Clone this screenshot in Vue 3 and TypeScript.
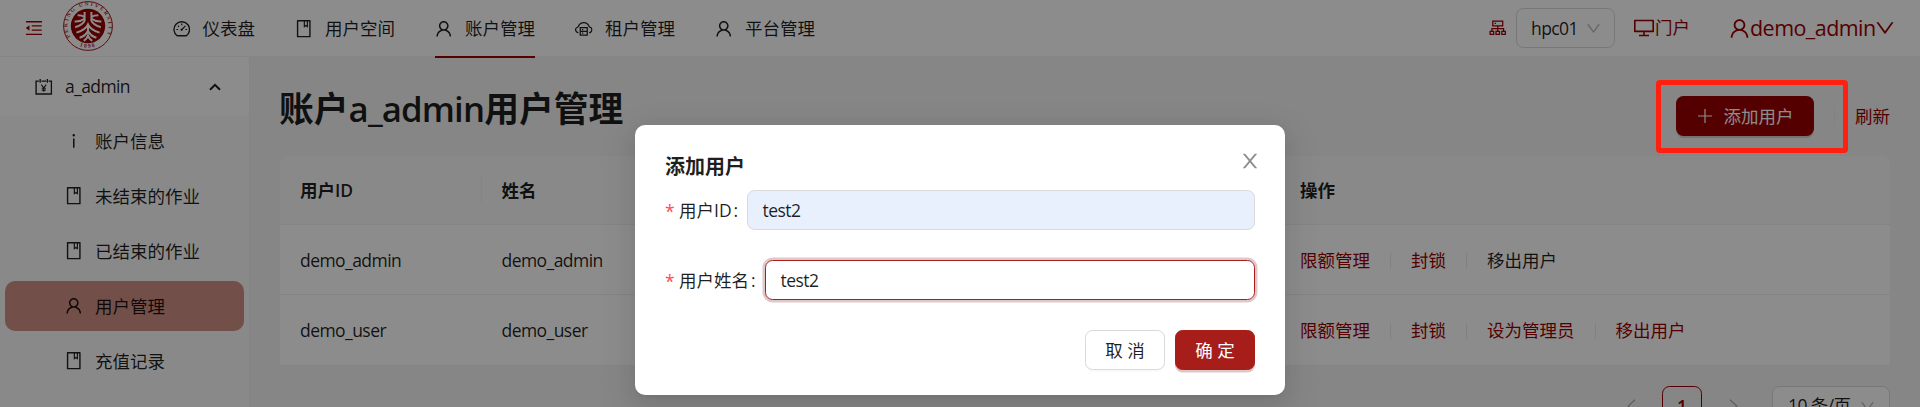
<script setup lang="ts">
type IconName = 'dashboard' | 'book' | 'user' | 'cloud' | 'info'

interface MenuItem {
  icon: IconName
  label: string
  active?: boolean
}

interface Action {
  label: string
  disabled?: boolean
}

interface Row {
  id: string
  name: string
  actions: Action[]
}

const topMenu: MenuItem[] = [
  { icon: 'dashboard', label: '仪表盘' },
  { icon: 'book', label: '用户空间' },
  { icon: 'user', label: '账户管理', active: true },
  { icon: 'cloud', label: '租户管理' },
  { icon: 'user', label: '平台管理' },
]

const sideMenu: MenuItem[] = [
  { icon: 'info', label: '账户信息' },
  { icon: 'book', label: '未结束的作业' },
  { icon: 'book', label: '已结束的作业' },
  { icon: 'user', label: '用户管理', active: true },
  { icon: 'book', label: '充值记录' },
]

const rows: Row[] = [
  {
    id: 'demo_admin',
    name: 'demo_admin',
    actions: [{ label: '限额管理' }, { label: '封锁' }, { label: '移出用户', disabled: true }],
  },
  {
    id: 'demo_user',
    name: 'demo_user',
    actions: [{ label: '限额管理' }, { label: '封锁' }, { label: '设为管理员' }, { label: '移出用户' }],
  },
]
</script>

<template>
  <div class="page">
    <svg class="defs" aria-hidden="true">
      <symbol id="i-user" viewBox="64 64 896 896">
        <path d="M858.5 763.6a374 374 0 00-80.6-119.5 375.63 375.63 0 00-119.5-80.6c-.4-.2-.8-.3-1.2-.5C719.5 518 760 444.7 760 362c0-137-111-248-248-248S264 225 264 362c0 82.7 40.5 156 102.8 201.1-.4.2-.8.3-1.2.5-44.8 18.9-85 46-119.5 80.6a375.63 375.63 0 00-80.6 119.5A371.7 371.7 0 00136 901.8a8 8 0 008 8.2h60c4.4 0 7.9-3.5 8-7.8 2-77.2 33-149.5 87.8-204.3 56.7-56.7 132-87.9 212.2-87.9s155.5 31.2 212.2 87.9C779 752.7 810 825 812 902.2c.1 4.4 3.6 7.8 8 7.8h60a8 8 0 008-8.2c-1-47.8-10.9-94.3-29.5-138.2zM512 534c-45.9 0-89.1-17.9-121.6-50.4S340 407.9 340 362c0-45.9 17.9-89.1 50.4-121.6S466.1 190 512 190s89.1 17.9 121.6 50.4S684 316.1 684 362c0 45.9-17.9 89.1-50.4 121.6S557.9 534 512 534z" />
      </symbol>
      <symbol id="i-book" viewBox="64 64 896 896">
        <path d="M832 64H192c-17.7 0-32 14.3-32 32v832c0 17.7 14.3 32 32 32h640c17.7 0 32-14.3 32-32V96c0-17.7-14.3-32-32-32zm-260 72h96v209.9L621.5 312 572 347.4V136zm220 752H232V136h280v296.9c0 3.3 1 6.6 3 9.3a15.9 15.9 0 0022.3 3.7l83.8-59.9 81.4 59.4c2.7 2 6 3.1 9.4 3.1 8.8 0 16-7.2 16-16V136h64v752z" />
      </symbol>
      <symbol id="i-info" viewBox="64 64 896 896">
        <path d="M448 224a64 64 0 10128 0 64 64 0 10-128 0zm96 168h-64c-4.4 0-8 3.6-8 8v464c0 4.4 3.6 8 8 8h64c4.4 0 8-3.6 8-8V400c0-4.4-3.6-8-8-8z" />
      </symbol>
      <symbol id="i-down" viewBox="64 64 896 896">
        <path d="M884 256h-75c-5.1 0-9.9 2.5-12.9 6.6L512 654.2 227.9 262.6c-3-4.1-7.8-6.6-12.9-6.6h-75c-6.5 0-10.3 7.4-6.5 12.7l352.6 486.1c12.8 17.6 39 17.6 51.7 0l352.6-486.1c3.9-5.3.1-12.7-6.4-12.7z" />
      </symbol>
      <symbol id="i-close" viewBox="64 64 896 896">
        <path d="M563.8 512l262.5-312.9c4.4-5.2.7-13.1-6.1-13.1h-79.8c-4.7 0-9.2 2.1-12.3 5.7L511.6 449.8 295.1 191.7c-3-3.6-7.5-5.7-12.3-5.7H203c-6.8 0-10.5 7.9-6.1 13.1L459.4 512 196.9 824.9A7.95 7.95 0 00203 838h79.8c4.7 0 9.2-2.1 12.3-5.7l216.5-258.1 216.5 258.1c3 3.6 7.5 5.7 12.3 5.7h79.8c6.8 0 10.5-7.9 6.1-13.1L563.8 512z" />
      </symbol>
      <symbol id="i-desktop" viewBox="64 64 896 896">
        <path d="M928 140H96c-17.7 0-32 14.3-32 32v496c0 17.7 14.3 32 32 32h380v112H304c-8.8 0-16 7.2-16 16v48c0 4.4 3.6 8 8 8h432c4.4 0 8-3.6 8-8v-48c0-8.8-7.2-16-16-16H548V700h380c17.7 0 32-14.3 32-32V172c0-17.7-14.3-32-32-32zm-40 488H136V212h752v416z" />
      </symbol>
      <symbol id="i-fold" viewBox="64 64 896 896">
        <path d="M408 442h480c4.4 0 8-3.6 8-8v-56c0-4.4-3.6-8-8-8H408c-4.4 0-8 3.6-8 8v56c0 4.4 3.6 8 8 8zm-8 204c0 4.4 3.6 8 8 8h480c4.4 0 8-3.6 8-8v-56c0-4.4-3.6-8-8-8H408c-4.4 0-8 3.6-8 8v56zm504-486H120c-4.4 0-8 3.6-8 8v56c0 4.4 3.6 8 8 8h784c4.4 0 8-3.6 8-8v-56c0-4.4-3.6-8-8-8zm0 632H120c-4.4 0-8 3.6-8 8v56c0 4.4 3.6 8 8 8h784c4.4 0 8-3.6 8-8v-56c0-4.4-3.6-8-8-8zM115.4 518.9L271.7 642c5.8 4.6 14.4.5 14.4-6.9V388.9c0-7.4-8.5-11.5-14.4-6.9L115.4 505.1a8.74 8.74 0 000 13.8z" />
      </symbol>
      <symbol id="i-dashboard" viewBox="0 0 18 18">
        <g fill="none" stroke="currentColor" stroke-width="1.4">
          <path d="M4.2 16.2A8 8 0 1 1 13.8 16.2Z" stroke-linejoin="round" />
          <path d="M9 3.6v1.7M3.5 9.8h1.7M12.8 9.8h1.7M5.1 5.9l1.1 1.1M8.9 10l3.9-3.9" stroke-width="1.2" />
        </g>
        <circle cx="8.8" cy="10.1" r="1.1" />
      </symbol>
      <symbol id="i-cloud" viewBox="0 0 18 18">
        <g fill="none" stroke="currentColor" stroke-width="1.3">
          <path d="M3.4 13.2C-.4 12.2 -.2 7.8 3.1 7.2C5.4 1.1 12.6 1.1 14.9 7.2C18.2 7.8 18.4 12.2 14.6 13.2" />
          <path d="M5.4 7.9h7.2v7.7H5.4zM5.4 11.7h7.2" />
          <path d="M7.1 9.8h1.4M7.1 13.6h1.4" />
        </g>
      </symbol>
      <symbol id="i-cluster" viewBox="0 0 18 18">
        <g fill="none" stroke="currentColor" stroke-width="1.3">
          <path d="M3.9 2.1h10.2v5H3.9zM9 7.1v5.3M3 12.6V9.9h12v2.7" />
          <path d="M1.2 12.7h3.6v3.1H1.2zM7.2 12.7h3.6v3.1H7.2zM13.2 12.7h3.6v3.1h-3.6z" />
          <path d="M5.8 4.6h1.4" />
        </g>
      </symbol>
      <symbol id="i-account" viewBox="0 0 18 18">
        <g fill="none" stroke="currentColor" stroke-width="1.4">
          <path d="M4 3.2H1.1v13.2h15.8V3.2H14M6.6 3.2h4.8M5.3 1v4M12.7 1v4" />
          <path d="M6.4 6.8L9 10.2l2.6-3.4M9 10.2v4M6.9 10.6h4.2M6.9 12.5h4.2" stroke-width="1.1" />
        </g>
      </symbol>
    </svg>

    <header class="header">
      <svg class="icon fold"><use href="#i-fold" /></svg>
      <svg class="logo" viewBox="0 0 50 50">
        <defs>
          <path id="ring-top" d="M7.4 36A20.6 20.6 0 1 1 42.6 36" />
          <path id="ring-bottom" d="M11 41.6A21.6 21.6 0 0 0 39 41.6" />
        </defs>
        <circle cx="25" cy="25" r="24.4" fill="#fff" stroke="#9b0000" stroke-width="0.9" />
        <circle cx="25" cy="25" r="17.2" fill="#9b0000" />
        <text class="seal"><textPath href="#ring-top" textLength="84">PEKING UNIVERSITY</textPath></text>
        <text class="seal year"><textPath href="#ring-bottom" startOffset="50%" text-anchor="middle">1898</textPath></text>
        <g fill="none" stroke="#fff" stroke-width="2">
          <path d="M21.6 11v8.6q-1.5 4-9.4 6.6M28.4 11v8.6q1.5 4 9.4 6.6" />
          <path d="M14.6 14.2q4.6 0 7 1.6M35.4 14.2q-4.6 0-7 1.6M11.6 20.4q6 .4 10-2.6M38.4 20.4q-6 .4-10-2.6" />
          <path d="M13.4 31.6Q22.6 29 25 23.4q2.4 5.6 11.6 8.2M16.6 36.8q6.8-2.4 8.4-7.2q1.6 4.8 8.4 7.2M25 23v9M20.8 39.8q3.2-2 4.2-5.2q1 3.2 4.2 5.2" />
        </g>
      </svg>
      <nav class="top-menu">
        <div v-for="item in topMenu" :key="item.label" class="top-item" :class="{ active: item.active }">
          <svg class="icon"><use :href="'#i-' + item.icon" /></svg>
          <span>{{ item.label }}</span>
        </div>
      </nav>
      <div class="header-right">
        <svg class="icon red"><use href="#i-cluster" /></svg>
        <div class="select cluster-select">
          <span>hpc01</span>
          <svg class="icon small grey"><use href="#i-down" /></svg>
        </div>
        <div class="portal">
          <svg class="icon"><use href="#i-desktop" /></svg><span>门户</span>
        </div>
        <div class="account">
          <svg class="icon"><use href="#i-user" /></svg><span>demo_admin</span><svg class="icon arrow"><use href="#i-down" /></svg>
        </div>
      </div>
    </header>

    <div class="body">
      <aside class="sidebar">
        <div class="side-title">
          <svg class="icon"><use href="#i-account" /></svg>
          <span class="side-name">a_admin</span>
          <svg class="caret" viewBox="0 0 12 8"><path d="M1 6.8L6 1.8l5 5" /></svg>
        </div>
        <div class="side-list">
          <div v-for="item in sideMenu" :key="item.label" class="side-item" :class="{ active: item.active }">
            <svg class="icon"><use :href="'#i-' + item.icon" /></svg>
            <span>{{ item.label }}</span>
          </div>
        </div>
      </aside>

      <main class="content">
        <div class="title-bar">
          <h1>账户<span class="latin">a_admin</span>用户管理</h1>
          <div class="tools">
            <button class="add">
              <svg class="plus" viewBox="0 0 14 14"><path d="M7 0v14M0 7h14" /></svg>
              <span>添加用户</span>
            </button>
            <i class="divider"></i>
            <a class="link refresh">刷新</a>
          </div>
        </div>

        <section class="table">
          <div class="tr head">
            <div class="th">用户<span class="th-latin">ID</span></div>
            <div class="th split">姓名</div>
            <div class="th">操作</div>
          </div>
          <div v-for="row in rows" :key="row.id" class="tr">
            <div class="td name">{{ row.id }}</div>
            <div class="td name">{{ row.name }}</div>
            <div class="td actions">
              <template v-for="(action, index) in row.actions" :key="action.label">
                <i v-if="index > 0" class="divider"></i>
                <a :class="action.disabled ? 'plain' : 'link'">{{ action.label }}</a>
              </template>
            </div>
          </div>
        </section>

        <div class="pager">
          <svg class="chev" viewBox="0 0 9 14"><path d="M8 .8L1.2 7 8 13.2" /></svg>
          <span class="page-no">1</span>
          <svg class="chev" viewBox="0 0 9 14"><path d="M1 .8L7.8 7 1 13.2" /></svg>
          <div class="select size-select">
            <span>10 条/页</span>
            <svg class="icon small grey"><use href="#i-down" /></svg>
          </div>
        </div>
      </main>
    </div>

    <div class="mask"></div>
    <div class="highlight"></div>

    <div class="modal">
      <div class="modal-head">
        <span class="modal-title">添加用户</span>
        <svg class="icon close"><use href="#i-close" /></svg>
      </div>
      <div class="field">
        <span class="star">*</span>
        <label class="label-id">用户ID<b class="colon">:</b></label>
        <div class="input filled">test2</div>
      </div>
      <div class="field">
        <span class="star">*</span>
        <label class="label-name">用户姓名<b class="colon">:</b></label>
        <div class="input focused">test2</div>
      </div>
      <div class="modal-foot">
        <button class="btn"><span>取 消</span></button>
        <button class="btn primary"><span>确 定</span></button>
      </div>
    </div>
  </div>
</template>

<style>
html,
body {
  overflow: hidden;
}
</style>

<style scoped>
.page {
  position: relative;
  width: 1920px;
  height: 407px;
  overflow: hidden;
  background: #f5f5f5;
  color: rgba(0, 0, 0, 0.88);
  font-family: 'Open Sans', 'Noto Sans CJK SC', sans-serif;
  font-size: 17.5px;
  font-weight: 400;
  line-height: 27.5px;
  white-space: nowrap;
}
.page * {
  box-sizing: border-box;
}
.defs {
  position: absolute;
  width: 0;
  height: 0;
}
.icon {
  display: block;
  flex: none;
  width: 17.5px;
  height: 17.5px;
  fill: currentColor;
}
.icon.small {
  width: 15px;
  height: 15px;
}
.red {
  color: #9b0000;
}
.grey {
  color: rgba(0, 0, 0, 0.28);
}
.header {
  display: flex;
  align-items: center;
  height: 57px;
  padding: 0 25px;
  background: #fff;
  border-bottom: 1px solid #f2f2f2;
}
.fold {
  width: 18px;
  height: 18px;
  color: #9b0000;
}
.logo {
  width: 50px;
  height: 50px;
  margin: 0 59.5px 5px 20px;
}
.seal {
  fill: #b03030;
  font-family: 'Liberation Serif', serif;
  font-size: 5.4px;
  font-weight: 700;
}
.seal.year {
  font-size: 5.8px;
  letter-spacing: 1.4px;
}
.top-menu {
  display: flex;
  gap: 40px;
}
.top-item {
  position: relative;
  display: flex;
  align-items: center;
  gap: 12.5px;
  height: 56px;
  padding-top: 2px;
}
.side-item span,
.add span,
.refresh,
.btn span {
  padding-top: 2px;
}
.top-item.active::after {
  content: '';
  position: absolute;
  left: 0;
  right: 0;
  bottom: -2px;
  height: 2px;
  background: #9b0000;
}
.header-right {
  display: flex;
  align-items: center;
  margin-left: auto;
}
.select {
  display: flex;
  align-items: center;
  justify-content: space-between;
  height: 40px;
  border: 1px solid #d9d9d9;
  border-radius: 7.5px;
  background: #fff;
}
.cluster-select {
  width: 99px;
  margin-left: 10px;
  padding: 0 13px 0 14px;
}
.cluster-select span {
  padding-top: 1px;
  letter-spacing: -0.6px;
}
.portal {
  display: flex;
  align-items: center;
  margin-left: 19px;
  color: #9b0000;
}
.portal .icon {
  width: 20px;
  height: 20px;
  margin-right: 1px;
}
.account {
  display: flex;
  align-items: center;
  margin-left: 39px;
  color: #9b0000;
  font-size: 21.5px;
}
.account .icon {
  width: 21px;
  height: 21px;
}
.account span {
  width: 125px;
  letter-spacing: -0.55px;
}
.account .arrow {
  width: 20px;
  height: 20px;
}
.body {
  display: flex;
  height: 350px;
}
.sidebar {
  flex: none;
  width: 250px;
  background: #fff;
  border-right: 1px solid #f0f0f0;
}
.side-title {
  display: flex;
  align-items: center;
  height: 59px;
  padding: 0 28px 0 35px;
}
.side-name {
  margin-left: 12.5px;
  letter-spacing: -0.6px;
}
.caret {
  width: 12px;
  height: 8px;
  margin-left: auto;
  fill: none;
  stroke: rgba(0, 0, 0, 0.88);
  stroke-width: 2;
}
.side-list {
  display: flex;
  flex-direction: column;
  gap: 5px;
  height: 291px;
  padding: 0 5px;
  background: #fafafa;
}
.side-item {
  display: flex;
  flex: none;
  align-items: center;
  gap: 12.5px;
  height: 50px;
  padding-left: 60px;
  border-radius: 10px;
}
.side-item.active {
  background: #d19085;
}
.content {
  flex: 1;
  padding: 24px 30px 0;
}
.title-bar {
  display: flex;
  justify-content: space-between;
  height: 75px;
}
h1 {
  margin: 0 0 0 -1px;
  font-size: 34.8px;
  font-weight: 700;
  line-height: 55px;
}
h1 .latin {
  font-weight: 600;
  letter-spacing: -0.9px;
}
.tools {
  display: flex;
  align-items: center;
  height: 40px;
  margin-top: 15px;
}
button {
  display: flex;
  align-items: center;
  justify-content: center;
  font: inherit;
}
.add {
  gap: 12px;
  width: 138px;
  height: 40px;
  padding: 0 0 0 1px;
  border: 0;
  border-radius: 7.5px;
  background: #9b0000;
  color: #fff;
  box-shadow: 0 2px 0 rgba(122, 0, 0, 0.16);
}
.plus {
  width: 14px;
  height: 14px;
  fill: none;
  stroke: #fff;
  stroke-width: 1.2;
}
.divider {
  width: 1px;
  height: 16px;
  margin: 0 20px;
  background: #ebebeb;
}
.link {
  color: #9b0000;
}
.table {
  width: 1610px;
  height: 210px;
  border-radius: 10px 10px 0 0;
  border-bottom: 1px solid #f0f0f0;
  background: #fff;
  overflow: hidden;
}
.tr {
  display: grid;
  grid-template-columns: 201.5px 798.5px 1fr;
  align-items: center;
  height: 70px;
  border-bottom: 1px solid #f0f0f0;
}
.tr:last-child {
  border-bottom: 0;
}
.tr.head {
  height: 69px;
  background: #fafafa;
}
.th {
  position: relative;
  padding: 2px 0 0 20px;
  font-weight: 700;
}
.th-latin {
  font-weight: 600;
}
.split::before {
  content: '';
  position: absolute;
  left: -1px;
  top: 0;
  width: 1px;
  height: 28px;
  background: #f0f0f0;
}
.td {
  padding: 2px 0 0 20px;
}
.name {
  letter-spacing: -0.55px;
}
.actions {
  display: flex;
  align-items: center;
}
.pager {
  display: flex;
  align-items: center;
  justify-content: flex-end;
  height: 40px;
  margin-top: 20px;
}
.chev {
  width: 9px;
  height: 14px;
  fill: none;
  stroke: rgba(0, 0, 0, 0.3);
  stroke-width: 1.2;
}
.page-no {
  width: 40px;
  height: 40px;
  margin: 0 27px 0 26px;
  border: 1px solid #9b0000;
  border-radius: 7.5px;
  color: #9b0000;
  font-weight: 600;
  line-height: 38px;
  text-align: center;
}
.size-select {
  width: 118px;
  margin-left: 34px;
  padding: 0 14px 0 15px;
}
.size-select span {
  letter-spacing: -0.6px;
}
.mask {
  position: absolute;
  inset: 0;
  background: rgba(0, 0, 0, 0.45);
}
.highlight {
  position: absolute;
  left: 1656px;
  top: 80px;
  width: 192px;
  height: 73px;
  border: 5px solid #ff2010;
  border-radius: 4px;
}
.modal {
  position: absolute;
  left: 635px;
  top: 125px;
  width: 650px;
  height: 270px;
  padding: 25px 30px;
  border-radius: 10px;
  background: #fff;
  box-shadow: 0 7.5px 20px rgba(0, 0, 0, 0.08), 0 4px 7.5px -5px rgba(0, 0, 0, 0.12), 0 11px 35px 10px rgba(0, 0, 0, 0.05);
}
.modal-head {
  display: flex;
  justify-content: space-between;
  height: 40px;
}
.modal-title {
  font-size: 20px;
  font-weight: 700;
  line-height: 34px;
}
.close {
  width: 20px;
  height: 20px;
  margin: 1px -5px 0 0;
  color: rgba(0, 0, 0, 0.45);
}
.field {
  display: flex;
  align-items: center;
  height: 40px;
  margin-bottom: 30px;
}
.field label {
  padding-top: 1px;
}
.star {
  width: 14px;
  padding-top: 2px;
  color: #ff4d4f;
  line-height: 20px;
}
.colon {
  margin-left: 2px;
  font-weight: 400;
}
.label-id {
  width: 68px;
}
.label-name {
  width: 86px;
}
.input {
  flex: 1;
  height: 40px;
  padding-left: 14.5px;
  border: 1px solid #d9d9d9;
  border-radius: 7.5px;
  letter-spacing: -0.55px;
  line-height: 39px;
}
.input.filled {
  background: #e8f0fe;
}
.input.focused {
  border-color: #a61d1a;
  box-shadow: 0 0 0 2.5px #dfc9c8;
}
.modal-foot {
  display: flex;
  justify-content: flex-end;
  gap: 10px;
}
.btn {
  width: 80px;
  height: 40px;
  padding: 0;
  border: 1px solid #d9d9d9;
  border-radius: 7.5px;
  background: #fff;
  color: rgba(0, 0, 0, 0.88);
  box-shadow: 0 2px 0 rgba(0, 0, 0, 0.02);
}
.btn.primary {
  border-color: #a61d1a;
  background: #a61d1a;
  color: #fff;
  box-shadow: 0 2.5px 0 #dcc8c7;
}
</style>
